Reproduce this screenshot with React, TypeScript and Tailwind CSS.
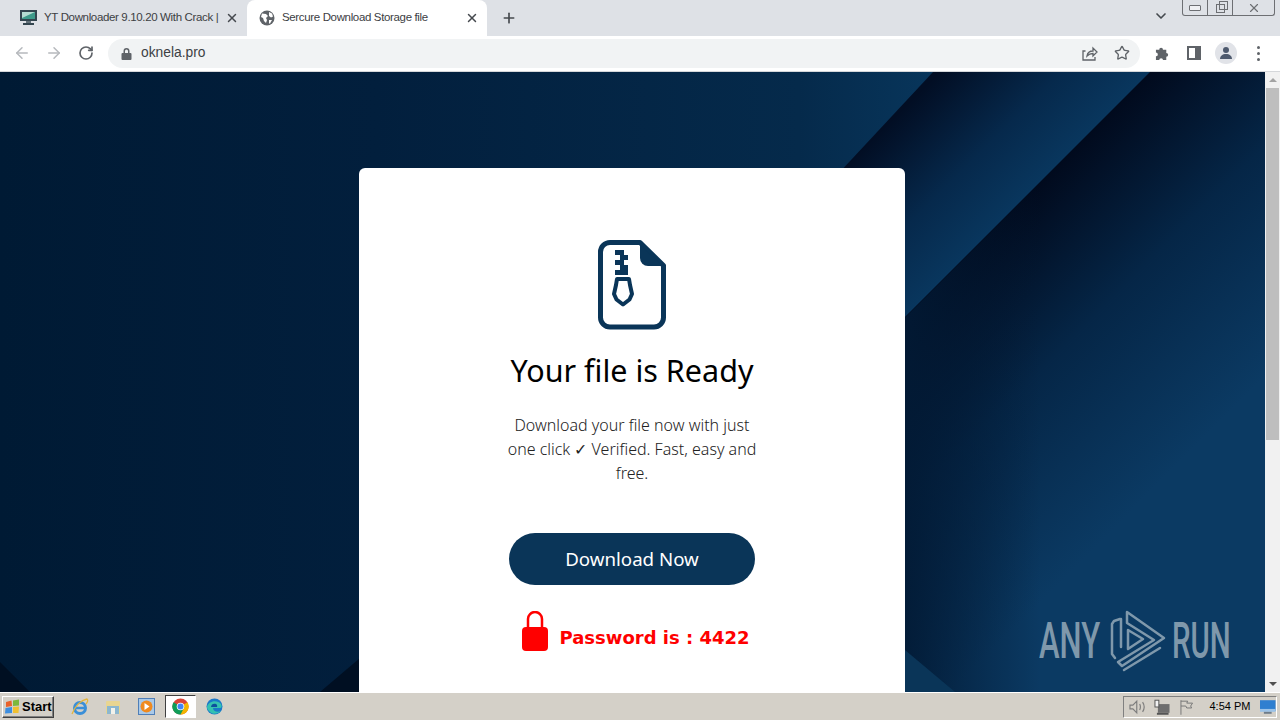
import { ArrowLeft, ArrowRight, RotateCw, X, Plus, ChevronDown, Star } from 'lucide-react'

function Background() {
  return (
    <svg className="absolute inset-0 w-full h-full" viewBox="0 0 1280 620" preserveAspectRatio="none">
      <defs>
        <linearGradient id="base" gradientUnits="userSpaceOnUse" x1="0" y1="0" x2="940" y2="0">
          <stop offset="0" stopColor="#001a34" />
          <stop offset="0.4" stopColor="#021f3d" />
          <stop offset="0.85" stopColor="#052a4b" />
          <stop offset="1" stopColor="#08365c" />
        </linearGradient>
        <linearGradient id="faceA" gradientUnits="userSpaceOnUse" x1="890" y1="50" x2="1000" y2="160">
          <stop offset="0" stopColor="#020e24" />
          <stop offset="0.55" stopColor="#06294c" />
          <stop offset="1" stopColor="#093860" />
        </linearGradient>
        <linearGradient id="faceB" gradientUnits="userSpaceOnUse" x1="1030" y1="120" x2="1240" y2="330">
          <stop offset="0" stopColor="#010a1d" />
          <stop offset="0.45" stopColor="#052647" />
          <stop offset="1" stopColor="#0b3a63" />
        </linearGradient>
        <linearGradient id="shade" gradientUnits="userSpaceOnUse" x1="905" y1="0" x2="1040" y2="0">
          <stop offset="0" stopColor="#021a35" stopOpacity="0.9" />
          <stop offset="1" stopColor="#021a35" stopOpacity="0" />
        </linearGradient>
      </defs>
      <rect width="1280" height="620" fill="url(#base)" />
      <polygon points="933,0 1150,0 700,450 700,250" fill="url(#faceA)" />
      <polygon points="1150,0 1280,0 1280,620 530,620" fill="url(#faceB)" />
      <polygon points="1040,111 1040,620 530,620" fill="url(#shade)" />
      <polygon points="905,578 955,620 905,620" fill="#0a3558" />
      <polygon points="0,590 30,620 0,620" fill="#000f22" />
      <polygon points="320,620 360,586 360,620" fill="#000f22" />
    </svg>
  )
}

function ZipFile() {
  return (
    <svg width="68" height="90" viewBox="0 0 68 90" fill="none">
      <path d="M42 2.500H12A9.500 9.500 0 0 0 2.500 12V77.500A9.500 9.500 0 0 0 12 87H56A9.500 9.500 0 0 0 65.500 77.500V25.500Z" stroke="#0a3558" strokeWidth="5" strokeLinejoin="round" />
      <path d="M42 5L65 26H50A8 8 0 0 1 42 18Z" fill="#0a3558" />
      <path d="M17 10h9v5h4v5h-4v5h4v10h-13v-5h5v-5h-5v-5h5v-5h-5z" fill="#0a3558" />
      <path d="M19 39h12l1 6 2 9-2.500 5.500-6.500 5-6.500-5L16 54l2-9z" stroke="#0a3558" strokeWidth="4" strokeLinejoin="round" />
    </svg>
  )
}

function AnyRunLogo() {
  return (
    <svg width="56" height="62" viewBox="0 0 56 62" fill="none" stroke="#7f98ab" strokeWidth="2.500" strokeLinejoin="round" strokeLinecap="round">
      <path d="M10 9 4 11 2 14V44L5 48" />
      <path d="M11 9V37" />
      <path d="M17 2 54 28 12 56 8 52 44 30 17 13Z" />
      <path d="M18 20 33 29 18 39Z" />
      <path d="M14 60 50 38" />
    </svg>
  )
}

function Favicon() {
  return (
    <svg width="17" height="16" viewBox="0 0 17 16">
      <rect x="0" y="0" width="17" height="11" fill="#33454f" />
      <rect x="2" y="2" width="13" height="7" fill="#3d9a8a" />
      <path d="M2 2h13L2 8z" fill="#b4dcd2" />
      <rect x="6" y="11" width="5" height="2" fill="#64727a" />
      <rect x="3" y="13" width="11" height="2" fill="#33454f" />
    </svg>
  )
}

function Globe() {
  return (
    <svg width="16" height="16" viewBox="0 0 16 16">
      <circle cx="8" cy="8" r="7.500" fill="#5f6368" />
      <path d="M3 3.500 7 4l2 2-2 2 1 2-1 3-2-2-1-3-2-1zM10 2l3 1.500 1 3-2 1-2-1.500zM10 10h3l-2 3.500h-1z" fill="#fff" />
    </svg>
  )
}

function Tab({ active, icon, title, width }: { active?: boolean; icon: React.ReactNode; title: string; width: string }) {
  return (
    <div className={`${width} h-9 flex items-center pl-3 ${active ? 'bg-white rounded-t-lg' : ''}`}>
      {icon}
      <span className="ml-[7px] w-[174px] whitespace-nowrap text-[11.500px] tracking-[-0.35px] text-[#3c4043] font-['Liberation_Sans',sans-serif]">{title}</span>
      <X size={14} strokeWidth={2.500} className="ml-auto mr-[8px] text-[#45494e]" />
    </div>
  )
}

function Toolbar() {
  return (
    <div className="h-9 bg-white flex items-center border-b border-[#d5d7da] pb-px">
      <div className="w-[108px] flex items-center pl-[13px] gap-[14px]">
        <ArrowLeft size={18} className="text-[#b6b9bd]" />
        <ArrowRight size={18} className="text-[#b6b9bd]" />
        <RotateCw size={16} strokeWidth={2.500} className="ml-px text-[#5f6368]" />
      </div>
      <div className="w-[1032px] h-[29px] bg-[#f1f3f4] rounded-full flex items-center pl-[13px]">
        <svg width="11" height="13" viewBox="0 0 11 13" fill="#5f6368">
          <path d="M2.500 6V4a3 3 0 0 1 6 0v2h1a1 1 0 0 1 1 1v5a1 1 0 0 1-1 1h-8a1 1 0 0 1-1-1V7a1 1 0 0 1 1-1zM4 6h3V4a1.500 1.500 0 0 0-3 0z" />
        </svg>
        <span className="ml-[9px] text-[13.800px] text-[#3c4043] font-['Liberation_Sans',sans-serif]">oknela.pro</span>
        <svg className="ml-auto" width="16" height="15" viewBox="0 0 16 15" fill="none" stroke="#5f6368" strokeWidth="1.300">
          <path d="M3.500 5H1v9h12v-3" />
          <path d="M5 10c.5-3 3-5 6-5V2l4 4-4 4V7.500c-2.500 0-4.500 1-6 2.500z" />
        </svg>
        <Star size={16} strokeWidth={2} className="ml-[16px] mr-[10px] text-[#5f6368]" />
      </div>
      <div className="flex items-center ml-[15px]">
        <svg width="16" height="16" viewBox="0 0 16 16" fill="#5f6368">
          <path d="M1 5h3.500a2 2 0 1 1 4 0H12v3.500a2 2 0 1 1 0 4V16H8.500a2 2 0 1 0-4 0H1v-4a2 2 0 1 0 0-4z" transform="scale(.94)" />
        </svg>
        <div className="ml-[16px] w-[14px] h-[14px] border-[2px] border-[#5f6368] border-r-[6px]" />
        <div className="ml-[14px] w-[22px] h-[22px] rounded-full bg-[#e1e3e8] flex items-center justify-center">
          <svg width="12" height="12" viewBox="0 0 12 12" fill="#4e5a6e">
            <circle cx="6" cy="3" r="3" />
            <path d="M0 12c0-3 2.500-5 6-5s6 2 6 5z" />
          </svg>
        </div>
        <div className="ml-[20px] flex flex-col gap-[3px]">
          <div className="w-[3px] h-[3px] rounded-full bg-[#5f6368]" />
          <div className="w-[3px] h-[3px] rounded-full bg-[#5f6368]" />
          <div className="w-[3px] h-[3px] rounded-full bg-[#5f6368]" />
        </div>
      </div>
    </div>
  )
}

function Scrollbar() {
  return (
    <div className="w-[15px] bg-[#f1f1f1] flex flex-col items-center relative z-10">
      <div className="h-4 flex items-center justify-center">
        <div className="w-0 h-0 border-x-[4px] border-x-transparent border-b-[4px] border-b-[#a3a3a3]" />
      </div>
      <div className="w-[13px] h-[352px] bg-[#bebebe]" />
      <div className="mt-auto h-4 flex items-center justify-center">
        <div className="w-0 h-0 border-x-[4px] border-x-transparent border-t-[4px] border-t-[#505050]" />
      </div>
    </div>
  )
}

function Taskbar() {
  return (
    <div className="h-7 bg-[#d4d0c8] border-t border-white flex items-center relative z-10 pl-[2px] font-['Liberation_Sans',sans-serif]">
      <div className="w-[52px] h-[22px] flex items-center gap-px pl-px bg-[#d4d0c8] border border-[#fff] border-r-[#404040] border-b-[#404040] shadow-[inset_-1px_-1px_0_#808080]">
        <svg width="17" height="16" viewBox="0 0 17 16">
          <path d="M2 3 7.500 1.500 8 7 2 8z" fill="#e8622c" />
          <path d="M9 1.500 15 0.500 15 6.500 9 7z" fill="#7cb83c" />
          <path d="M1.500 9 8 8 8 14 1 14.500z" fill="#3d8ee0" />
          <path d="M9 8 15 7.500 14.500 14 9 14z" fill="#f0c030" />
        </svg>
        <span className="text-[13px] font-bold text-black">Start</span>
      </div>
      <div className="flex items-center ml-[17px]">
        <svg width="18" height="18" viewBox="0 0 18 18" fill="none">
          <circle cx="9" cy="10" r="5.500" stroke="#3a8fd8" strokeWidth="3" />
          <path d="M3 10h12" stroke="#3a8fd8" strokeWidth="2.500" />
          <path d="M1 16C4 8 10 2 16 1c1.500 1 .5 3-1 5" stroke="#e3b53d" strokeWidth="1.300" />
        </svg>
        <svg className="ml-[16px]" width="16" height="18" viewBox="0 0 16 18">
          <rect x="1" y="3" width="14" height="13" rx="1" fill="#e8d591" />
          <rect x="2" y="8" width="12" height="8" fill="#8cb7cf" />
          <rect x="6" y="10" width="4" height="6" fill="#f2f2ea" />
        </svg>
        <svg className="ml-[17px]" width="17" height="17" viewBox="0 0 17 17">
          <rect x="0.500" y="0.500" width="16" height="16" fill="#a9c9e8" stroke="#4f7fb8" />
          <circle cx="8.500" cy="8.500" r="6" fill="#f08a1e" />
          <path d="M6.500 5l5 3.500-5 3.500z" fill="#fff" />
        </svg>
        <div className="ml-[10px] w-[31px] h-[23px] bg-white border border-[#404040] border-r-white border-b-white flex items-center justify-center">
          <svg width="17" height="17" viewBox="0 0 18 18">
            <circle cx="9" cy="9" r="8.500" fill="#db4437" />
            <path d="M9 9 16.400 4.500A8.500 8.500 0 0 1 9 17.500z" fill="#f4b400" />
            <path d="M9 9 1.600 4.500A8.500 8.500 0 0 0 9 17.500L13 10z" fill="#0f9d58" />
            <circle cx="9" cy="9" r="4" fill="#fff" />
            <circle cx="9" cy="9" r="3.200" fill="#4285f4" />
          </svg>
        </div>
        <svg className="ml-[10px]" width="17" height="17" viewBox="0 0 17 17">
          <circle cx="8.500" cy="8.500" r="8" fill="#1a78c8" />
          <path d="M1 9C2 3 11 1 15 6c1 2 1 4-1 4H7c0 3 4 5 8 3-3 3-8 4-11 1C2 12 1 11 1 9z" fill="#35c1b1" />
          <path d="M5 9c0-3 3-4 5-3 1 .5 1.500 2 1 3z" fill="#0d4f9c" />
        </svg>
      </div>
      <div className="ml-auto mr-[3px] w-[154px] h-[22px] border border-[#808080] border-r-white border-b-white flex items-center pl-[5px]">
        <svg width="18" height="16" viewBox="0 0 18 16" fill="none" stroke="#7d7d7d" strokeWidth="1.200">
          <path d="M1 6h3l4-4v12l-4-4H1zM11 5c1 2 1 4 0 6M14 3c2 3 2 7 0 10" />
        </svg>
        <svg className="ml-[8px]" width="16" height="16" viewBox="0 0 16 16">
          <rect x="4" y="5" width="12" height="9" fill="#6e6e6e" />
          <rect x="1" y="1" width="4" height="7" fill="#f2f2f2" stroke="#555" />
          <rect x="3" y="14" width="12" height="2" fill="#555" />
        </svg>
        <svg className="ml-[9px]" width="16" height="16" viewBox="0 0 16 16" fill="none" stroke="#777">
          <path d="M2 1v15M2 2h7l-1 2 6 0-2 3 1 2H8L7 7H2" />
        </svg>
        <span className="ml-[15px] w-[41px] whitespace-nowrap text-[11px] text-black">4:54 PM</span>
        <svg className="ml-[10px]" width="16" height="14" viewBox="0 0 16 14">
          <rect width="16" height="11" fill="#2f7fd0" />
          <rect y="9" width="16" height="3" fill="#9cc3e8" />
          <rect x="4" y="12" width="8" height="2" fill="#6f7d8a" />
        </svg>
      </div>
    </div>
  )
}

export default function App() {
  return (
    <div className="w-[1280px] h-[720px] overflow-hidden flex flex-col font-['Noto_Sans',sans-serif]">
      <div className="h-9 bg-[#dee1e6] flex items-start pl-2 pr-[5px]">
        <Tab icon={<Favicon />} title="YT Downloader 9.10.20 With Crack |" width="w-[239px]" />
        <Tab active icon={<Globe />} title="Sercure Download Storage file" width="w-[240px]" />
        <div className="h-9 flex items-center ml-[14px]">
          <Plus size={16} strokeWidth={2.500} className="text-[#45494e]" />
        </div>
        <div className="h-8 flex items-center ml-auto mr-[13px]">
          <ChevronDown size={16} strokeWidth={2.500} className="text-[#45494e]" />
        </div>
        <div className="flex h-4 border border-t-0 border-[#6d6f73] rounded-b-[3px] text-[#6d6f73]">
          <div className="w-[25px] flex items-center justify-center border-r border-[#6d6f73]">
            <div className="w-[12px] h-[6px] border border-[#6d6f73] rounded-[1px] bg-white/50" />
          </div>
          <div className="w-[25px] flex items-center justify-center border-r border-[#6d6f73]">
            <div className="relative w-[9px] h-[9px] border border-[#6d6f73] mt-[2px] after:absolute after:w-[9px] after:h-[9px] after:border after:border-[#6d6f73] after:-top-[4px] after:left-[2px]" />
          </div>
          <div className="w-[41px] flex items-center justify-center">
            <X size={14} strokeWidth={2} />
          </div>
        </div>
      </div>
      <Toolbar />
      <div className="h-[620px] flex relative overflow-hidden">
        <Background />
        <div className="flex-1 flex justify-center items-start pt-[96px] pr-px relative">
          <div className="w-[546px] h-[640px] bg-white rounded-md flex flex-col items-center pt-[72px]">
            <ZipFile />
            <h1 className="mt-[18px] text-[30.500px] leading-[44px] text-black">Your file is Ready</h1>
            <p className="mt-[21px] w-[260px] text-center text-[16px] leading-[24px] font-light text-[#222]">
              Download your file now with just one click ✓ Verified. Fast, easy and free.
            </p>
            <button className="mt-[48px] w-[246px] h-[52px] pt-px rounded-full bg-[#0a3558] text-white text-[18.700px]">Download Now</button>
            <div className="mt-[26px] ml-[7px] flex items-end">
              <svg width="28" height="40" viewBox="0 0 28 40" fill="none">
                <path d="M7 18V8a7 7 0 0 1 14 0v10" stroke="#f00" strokeWidth="2.500" />
                <rect x="1" y="16" width="26" height="24" rx="4" fill="#f00" />
              </svg>
              <span className="ml-[10px] text-[18px] leading-[26px] font-bold text-[#f00] font-['DejaVu_Sans',sans-serif]">Password is : 4422</span>
            </div>
          </div>
        </div>
        <Scrollbar />
        <div className="absolute left-[1039px] top-[538px] flex items-center text-[#7f98ab] font-medium font-['Roboto',sans-serif]">
          <span className="w-[66px] text-[50px] leading-[60px] origin-left scale-x-[0.62] inline-block">ANY</span>
          <div className="ml-[5px]"><AnyRunLogo /></div>
          <span className="ml-[6px] w-[60px] text-[50px] leading-[60px] origin-left scale-x-[0.59] inline-block">RUN</span>
        </div>
      </div>
      <Taskbar />
    </div>
  )
}
